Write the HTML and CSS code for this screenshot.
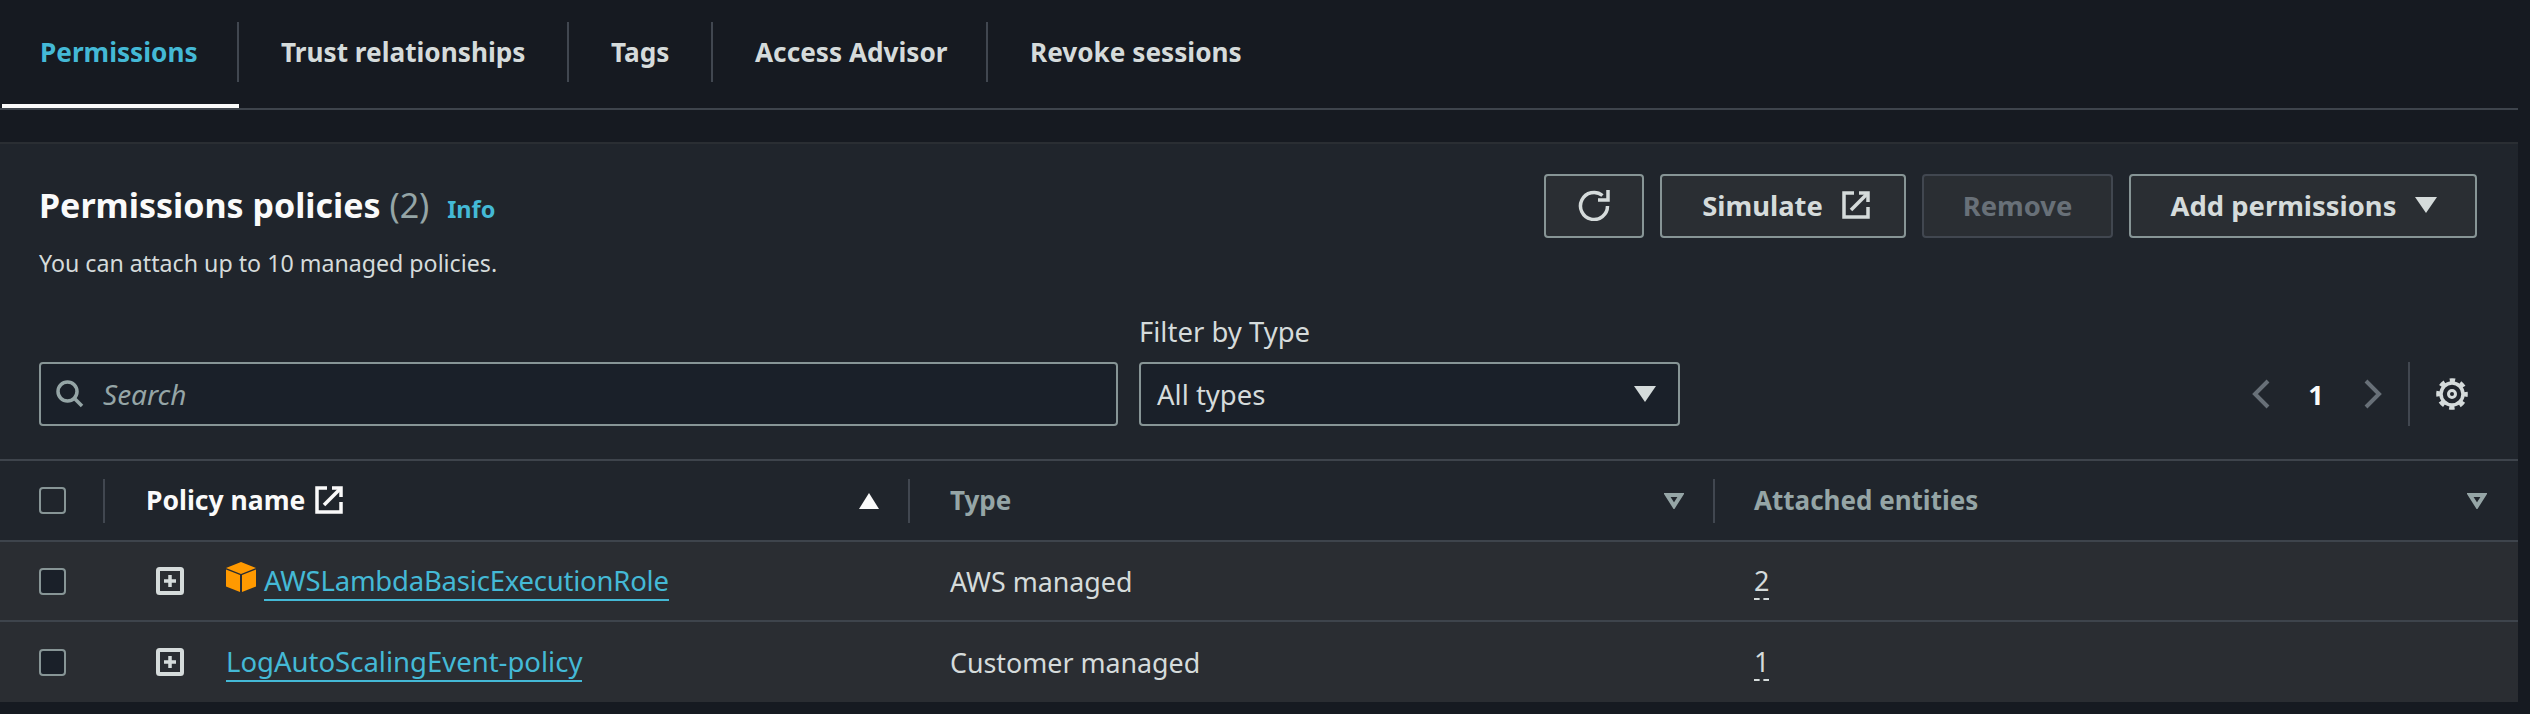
FILE: index.html
```html
<!DOCTYPE html>
<html>
<head>
<link rel="stylesheet" href="styles.css">
</head>
<body>

<div class="page">
  <nav class="tabs">
    <a class="tab active"><span class="tab-label">Permissions</span></a>
    <a class="tab"><span class="tab-label">Trust relationships</span></a>
    <a class="tab"><span class="tab-label">Tags</span></a>
    <a class="tab"><span class="tab-label">Access Advisor</span></a>
    <a class="tab"><span class="tab-label no-sep">Revoke sessions</span></a>
  </nav>

  <section class="card">
    <div class="card-head">
      <div class="title-block">
        <h2 class="title">Permissions policies <span class="count">(2)</span> <a class="info">Info</a></h2>
        <p class="subtitle">You can attach up to 10 managed policies.</p>
      </div>
      <div class="actions">
        <button class="button button-icon">
          <svg class="icon-32" viewBox="0 0 32 32" fill="none" stroke="currentColor" stroke-width="3.5"><path d="M29.5 17a13.5 13.5 0 1 1-5-10.5"/><path d="M30 1v10H20"/></svg>
        </button>
        <button class="button button-simulate">Simulate
          <svg class="icon-28" viewBox="0 0 28 28" fill="none" stroke="currentColor" stroke-width="3.5"><path d="M12 2H2v24h24V16"/><path d="M9 19 25 3"/><path d="M17 2h9v9"/></svg>
        </button>
        <button class="button disabled">Remove</button>
        <button class="button button-add">Add permissions
          <svg class="caret" viewBox="0 0 22 16"><path d="M0 0h22L11 16z" fill="currentColor"/></svg>
        </button>
      </div>
    </div>

    <div class="filters">
      <div class="search">
        <svg class="search-icon" viewBox="0 0 28 28" fill="none" stroke="currentColor" stroke-width="3.5"><circle cx="11.5" cy="11.5" r="9.5"/><path d="M18 18l8 8"/></svg>
        <span class="search-text">Search</span>
      </div>
      <div class="filter-field">
        <label class="filter-label">Filter by Type</label>
        <div class="select">All types
          <svg class="caret" viewBox="0 0 22 16"><path d="M0 0h22L11 16z" fill="currentColor"/></svg>
        </div>
      </div>
      <div class="pager">
        <svg class="chevron" viewBox="0 0 18 30" fill="none" stroke="currentColor" stroke-width="4"><path d="M16 2 3 15l13 13"/></svg>
        <span class="page-num">1</span>
        <svg class="chevron" viewBox="0 0 18 30" fill="none" stroke="currentColor" stroke-width="4"><path d="M2 2l13 13L2 28"/></svg>
        <span class="pager-sep"></span>
        <svg class="gear" viewBox="0 0 32 32" fill="none" stroke="currentColor"><circle cx="16" cy="16" r="11" stroke-width="3.5"/><circle cx="16" cy="16" r="13.8" stroke-width="4" stroke-dasharray="5.4 5.44" stroke-dashoffset="2.7"/><circle cx="16" cy="16" r="3.5" stroke-width="3"/></svg>
      </div>
    </div>

    <div class="table">
      <div class="row head-row">
        <div class="cell"><span class="checkbox head-check"></span></div>
        <div class="cell"><div class="th active-th"><span class="th-text">Policy name
          <svg class="icon-28" viewBox="0 0 28 28" fill="none" stroke="currentColor" stroke-width="3.5"><path d="M12 2H2v24h24V16"/><path d="M9 19 25 3"/><path d="M17 2h9v9"/></svg></span>
          <svg class="sort" viewBox="0 0 20 16"><path d="M10 0l10 16H0z" fill="currentColor"/></svg>
        </div></div>
        <div class="cell"><div class="th"><span class="th-text">Type</span>
          <svg class="sort" viewBox="0 0 20 16" fill="none" stroke="currentColor" stroke-width="4"><path d="M3 2h14l-7 11z"/></svg>
        </div></div>
        <div class="cell"><div class="th last-th"><span class="th-text">Attached entities</span>
          <svg class="sort" viewBox="0 0 20 16" fill="none" stroke="currentColor" stroke-width="4"><path d="M3 2h14l-7 11z"/></svg>
        </div></div>
      </div>

      <div class="row body-row">
        <div class="cell"><span class="checkbox"></span></div>
        <div class="cell name-cell">
          <svg class="expand" viewBox="0 0 28 28"><rect x="2" y="2" width="24" height="24" rx="1.5" fill="none" stroke="currentColor" stroke-width="4"/><path d="M14 8v12M8 14h12" stroke="currentColor" stroke-width="3.5"/></svg>
          <svg class="cube" viewBox="0 0 30 30"><path d="M15 0l15 6-15 6L0 6z" fill="#f90"/><path d="M0 7.5l14 5.5v17L0 24.5z" fill="#f90"/><path d="M30 7.5L16 13v17l14-5.5z" fill="#f90"/></svg>
          <a class="link link-tight">AWSLambdaBasicExecutionRole</a>
        </div>
        <div class="cell type-cell">AWS managed</div>
        <div class="cell count-cell"><span class="dashed">2</span></div>
      </div>

      <div class="row body-row">
        <div class="cell"><span class="checkbox"></span></div>
        <div class="cell name-cell">
          <svg class="expand" viewBox="0 0 28 28"><rect x="2" y="2" width="24" height="24" rx="1.5" fill="none" stroke="currentColor" stroke-width="4"/><path d="M14 8v12M8 14h12" stroke="currentColor" stroke-width="3.5"/></svg>
          <a class="link">LogAutoScalingEvent-policy</a>
        </div>
        <div class="cell type-cell">Customer managed</div>
        <div class="cell count-cell"><span class="dashed">1</span></div>
      </div>
    </div>
  </section>
</div>

</body>
</html>
```

FILE: styles.css
```css
body {
  margin: 0;
  height: 714px;
  overflow: hidden;
  background-color: #161a21;
  color: #d5dbdb;
  font-family: "Noto Sans", sans-serif;
  font-size: 27px;
}

.page {
  width: 2518px;
}

/* tabs */
.tabs {
  display: flex;
  height: 108px;
  padding-left: 2px;
  border-bottom: 2px solid #3e444c;
}

.tab {
  height: 108px;
  box-sizing: border-box;
  padding-top: 22px;
  font-size: 26.2px;
  font-weight: 700;
  color: #d5dbdb;
}

.tab:nth-child(1) {
  width: 237px;
}

.tab:nth-child(2) {
  width: 330px;
}

.tab:nth-child(3) {
  width: 144px;
}

.tab:nth-child(4) {
  width: 275px;
}

.tab.active {
  border-bottom: 4px solid #fafafa;
  color: #44b9d6;
}

.tab-label {
  display: flex;
  align-items: center;
  height: 60px;
  box-sizing: border-box;
  padding-left: 42px;
  border-right: 2px solid #414750;
}

.tab.active .tab-label {
  padding-left: 38px;
}

.tab-label.no-sep {
  border-right: none;
}

/* card */
.card {
  margin-top: 32px;
  height: 560px;
  box-sizing: border-box;
  border-top: 2px solid #2a2e33;
  background-color: #20252c;
}

.card-head {
  display: flex;
  justify-content: space-between;
  padding: 30px 41px 0 39px;
}

.title-block {
  height: 138px;
  padding-top: 11px;
  box-sizing: border-box;
}

.title {
  margin: 0;
  font-size: 34px;
  line-height: 40px;
  font-weight: 700;
  color: #fafafa;
}

.count {
  font-weight: 400;
  color: #95a5a6;
}

.info {
  margin-left: 9px;
  font-size: 23.5px;
  font-weight: 700;
  color: #44b9d6;
}

.subtitle {
  margin: 14px 0 0;
  font-size: 23.2px;
  line-height: 40px;
}

.actions {
  display: flex;
  gap: 16px;
}

.button {
  display: flex;
  align-items: center;
  justify-content: center;
  gap: 19px;
  height: 64px;
  padding: 0 0 2px;
  box-sizing: border-box;
  border: 2px solid #879596;
  border-radius: 4px;
  background-color: #2a2e33;
  color: #d5dbdb;
  font-family: inherit;
  font-size: 27.4px;
  font-weight: 700;
}

.button-icon {
  width: 100px;
}

.button-simulate {
  width: 246px;
  padding-left: 6px;
}

.button-add {
  width: 348px;
  padding-left: 2px;
}

.button.disabled {
  width: 191px;
  border-color: #414750;
  color: #687078;
}

.icon-32 {
  width: 32px;
  height: 32px;
}

.icon-28 {
  width: 28px;
  height: 28px;
}

.caret {
  width: 22px;
  height: 16px;
}

/* search and filter */
.filters {
  display: flex;
  align-items: flex-end;
  gap: 21px;
  padding: 0 41px 0 39px;
}

.search {
  display: flex;
  align-items: center;
  width: 1079px;
  height: 64px;
  box-sizing: border-box;
  padding-left: 15px;
  border: 2px solid #879596;
  border-radius: 4px;
  background-color: #1a2029;
}

.search-icon {
  width: 28px;
  height: 28px;
  color: #95a5a6;
}

.search-text {
  margin-left: 19px;
  font-size: 28px;
  font-style: italic;
  color: #95a5a6;
}

.filter-label {
  display: block;
  margin-bottom: 10px;
  font-size: 27.5px;
  line-height: 40px;
}

.select {
  display: flex;
  align-items: center;
  justify-content: space-between;
  width: 541px;
  height: 64px;
  box-sizing: border-box;
  padding: 0 22px 0 16px;
  border: 2px solid #879596;
  border-radius: 4px;
  background-color: #1a2029;
  font-size: 27.5px;
}

.pager {
  display: flex;
  align-items: center;
  height: 64px;
  margin-left: auto;
}

.chevron {
  width: 18px;
  height: 30px;
  color: #687078;
}

.page-num {
  width: 92px;
  margin-right: 2px;
  text-align: center;
  font-size: 27px;
  font-weight: 700;
  color: #fafafa;
}

.pager-sep {
  width: 2px;
  height: 64px;
  margin: 0 26px;
  background-color: #414750;
}

.gear {
  width: 32px;
  height: 32px;
  margin-right: 9px;
}

/* table */
.table {
  margin-top: 33px;
  border-top: 2px solid #3e444c;
}

.row {
  display: grid;
  grid-template-columns: 105px 803px 805px 805px;
  align-items: center;
}

.head-row {
  height: 81px;
  box-sizing: border-box;
  border-bottom: 2px solid #3e444c;
}

.body-row {
  height: 80px;
  box-sizing: border-box;
  background-color: #2a2d32;
  border-bottom: 2px solid #3e444c;
}

.body-row:last-child {
  border-bottom: none;
}

.cell:first-child {
  display: flex;
  align-items: center;
  height: 44px;
  padding-left: 39px;
  border-right: 2px solid #414750;
  box-sizing: border-box;
}

.body-row .cell:first-child {
  border-right: none;
}

.checkbox {
  display: block;
  width: 27px;
  height: 27px;
  box-sizing: border-box;
  border: 2px solid #879596;
  border-radius: 4px;
  background-color: #1a2029;
}

.head-check {
  background-color: #20252c;
}

.th {
  display: flex;
  align-items: center;
  justify-content: space-between;
  height: 44px;
  padding: 0 29px 0 40px;
  font-size: 26px;
  font-weight: 700;
  color: #95a5a6;
}

.cell + .cell + .cell .th {
  border-left: 2px solid #414750;
}

.active-th {
  padding-left: 41px;
  font-size: 26.5px;
  color: #fafafa;
}

.last-th {
  padding: 0 31px 0 39px;
}

.th-text {
  display: flex;
  align-items: center;
  gap: 10px;
  padding-bottom: 2px;
}

.sort {
  width: 20px;
  height: 16px;
}

.name-cell {
  display: flex;
  align-items: center;
  padding-left: 51px;
}

.expand {
  width: 28px;
  height: 28px;
  margin-right: 42px;
}

.cube {
  width: 30px;
  height: 30px;
  margin: 0 8px 8px 0;
}

.link {
  margin-top: 2px;
  color: #44b9d6;
  font-size: 27.5px;
  line-height: 36px;
  border-bottom: 2px solid #44b9d6;
}

.link-tight {
  letter-spacing: -0.22px;
}

.type-cell {
  padding-left: 42px;
  font-size: 26.8px;
}

.count-cell {
  padding-left: 41px;
  font-size: 27px;
}

.dashed {
  display: inline-block;
  line-height: 34px;
  border-bottom: 2px dashed #d5dbdb;
}
```
